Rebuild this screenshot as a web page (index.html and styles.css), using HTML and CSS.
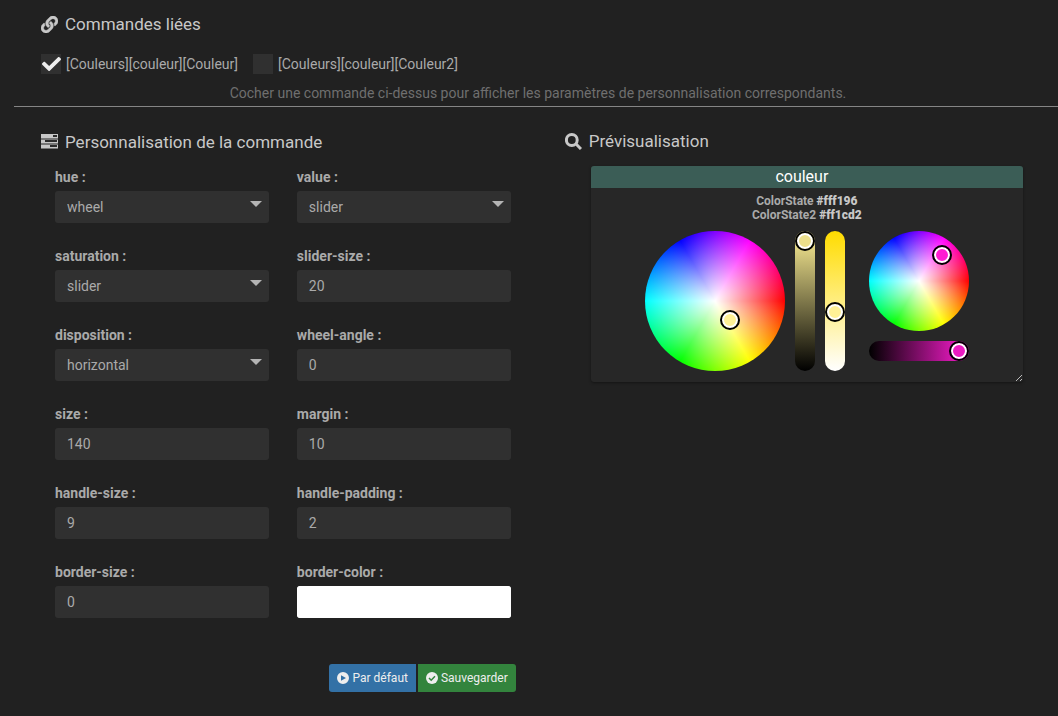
FILE: index.html
```html
<!DOCTYPE html>
<html lang="fr">
<head>
<meta charset="utf-8">
<title>Personnalisation des commandes</title>
<link rel="stylesheet" href="styles.css">
</head>
<body>
<section class="linked">
  <h2 class="legend">
    <svg class="icon icon-link" viewBox="0 0 512 512" aria-hidden="true"><path d="M326.612 185.391c59.747 59.809 58.927 155.698.36 214.59-.11.12-.24.25-.36.37l-67.2 67.2c-59.27 59.27-155.699 59.262-214.96 0-59.27-59.26-59.27-155.7 0-214.96l37.106-37.106c9.84-9.84 26.786-3.3 27.294 10.606.648 17.722 3.826 35.527 9.69 52.721 1.986 5.822.567 12.262-3.783 16.612l-13.087 13.087c-28.026 28.026-28.905 73.66-1.155 101.96 28.024 28.579 74.086 28.749 102.325.51l67.2-67.19c28.191-28.191 28.073-73.757 0-101.83-3.701-3.694-7.429-6.564-10.341-8.569a16.037 16.037 0 0 1-6.947-12.606c-.396-10.567 3.348-21.456 11.698-29.806l21.054-21.055c5.521-5.521 14.182-6.199 20.584-1.731a152.482 152.482 0 0 1 20.522 17.197zM467.547 44.449c-59.261-59.262-155.69-59.27-214.96 0l-67.2 67.2c-.12.12-.25.25-.36.37-58.566 58.892-59.387 154.781.36 214.59a152.454 152.454 0 0 0 20.521 17.196c6.402 4.468 15.064 3.789 20.584-1.731l21.054-21.055c8.35-8.35 12.094-19.239 11.698-29.806a16.037 16.037 0 0 0-6.947-12.606c-2.912-2.005-6.64-4.875-10.341-8.569-28.073-28.073-28.191-73.639 0-101.83l67.2-67.19c28.239-28.239 74.3-28.069 102.325.51 27.75 28.3 26.872 73.934-1.155 101.96l-13.087 13.087c-4.35 4.35-5.769 10.79-3.783 16.612 5.864 17.194 9.042 34.999 9.69 52.721.509 13.906 17.454 20.446 27.294 10.606l37.106-37.106c59.271-59.259 59.271-155.699.001-214.959z"/></svg>
    Commandes liées
  </h2>
  <div class="checks">
    <label class="check">
      <input type="checkbox" class="check-box" checked>
      <svg class="check-mark" viewBox="0 0 512 512" aria-hidden="true"><path d="M173.898 439.404l-166.4-166.4c-9.997-9.997-9.997-26.206 0-36.204l36.203-36.204c9.997-9.998 26.207-9.998 36.204 0L192 312.69 432.095 72.596c9.997-9.997 26.207-9.997 36.204 0l36.203 36.204c9.997 9.997 9.997 26.206 0 36.204l-294.4 294.401c-9.998 9.997-26.207 9.997-36.204-.001z"/></svg>
      <span>[Couleurs][couleur][Couleur]</span>
    </label>
    <label class="check">
      <input type="checkbox" class="check-box">
      <svg class="check-mark" viewBox="0 0 512 512" aria-hidden="true"><path d="M173.898 439.404l-166.4-166.4c-9.997-9.997-9.997-26.206 0-36.204l36.203-36.204c9.997-9.998 26.207-9.998 36.204 0L192 312.69 432.095 72.596c9.997-9.997 26.207-9.997 36.204 0l36.203 36.204c9.997 9.997 9.997 26.206 0 36.204l-294.4 294.401c-9.998 9.997-26.207 9.997-36.204-.001z"/></svg>
      <span>[Couleurs][couleur][Couleur2]</span>
    </label>
  </div>
  <p class="hint">Cocher une commande ci-dessus pour afficher les paramètres de personnalisation correspondants.</p>
</section>

<main class="columns">
  <form class="settings">
    <h2 class="legend">
      <svg class="icon" viewBox="0 0 17 17" aria-hidden="true"><path class="icon-edge" d="M0 0h17v15H0z"/><path d="M0 0h17v4H0zM0 6h17v3H0zM0 11h17v3H0z"/><path class="icon-cut" d="M12 1h4v2h-4zM4 6h12v2H4zM9 11h7v2H9z"/></svg>
      Personnalisation de la commande
    </h2>
    <div class="fields">
      <div class="field"><label class="field-label" for="hue">hue :</label><select class="control select" id="hue"><option>wheel</option><option>slider</option></select></div>
      <div class="field"><label class="field-label" for="value">value :</label><select class="control select" id="value"><option>slider</option></select></div>
      <div class="field"><label class="field-label" for="saturation">saturation :</label><select class="control select" id="saturation"><option>slider</option></select></div>
      <div class="field"><label class="field-label" for="slider-size">slider-size :</label><input class="control" id="slider-size" type="text" value="20"></div>
      <div class="field"><label class="field-label" for="disposition">disposition :</label><select class="control select" id="disposition"><option>horizontal</option><option>vertical</option></select></div>
      <div class="field"><label class="field-label" for="wheel-angle">wheel-angle :</label><input class="control" id="wheel-angle" type="text" value="0"></div>
      <div class="field"><label class="field-label" for="size">size :</label><input class="control" id="size" type="text" value="140"></div>
      <div class="field"><label class="field-label" for="margin">margin :</label><input class="control" id="margin" type="text" value="10"></div>
      <div class="field"><label class="field-label" for="handle-size">handle-size :</label><input class="control" id="handle-size" type="text" value="9"></div>
      <div class="field"><label class="field-label" for="handle-padding">handle-padding :</label><input class="control" id="handle-padding" type="text" value="2"></div>
      <div class="field"><label class="field-label" for="border-size">border-size :</label><input class="control" id="border-size" type="text" value="0"></div>
      <div class="field"><label class="field-label" for="border-color">border-color :</label><input class="control color" id="border-color" type="color" value="#ffffff"></div>
    </div>
    <div class="actions">
      <button type="button" class="btn btn-default"><svg class="btn-icon" viewBox="0 0 12 12" aria-hidden="true"><path fill-rule="evenodd" d="M6 0a6 6 0 1 0 0 12A6 6 0 0 0 6 0zM4 3.2v5.6L9 6z"/></svg>Par défaut</button>
      <button type="submit" class="btn btn-save"><svg class="btn-icon" viewBox="0 0 12 12" aria-hidden="true"><circle cx="6" cy="6" r="6"/><path class="tick" d="M3 6l2.200 2.200L9 4.300"/></svg>Sauvegarder</button>
    </div>
  </form>

  <section class="preview">
    <h2 class="legend">
      <svg class="icon" viewBox="0 0 17 17" aria-hidden="true"><path class="lens" d="M12.200 7A5.400 5.400 0 1 1 1.400 7a5.400 5.400 0 0 1 10.800 0zM10.800 10.800L16 16"/></svg>
      Prévisualisation
    </h2>
    <article class="widget">
      <h3 class="widget-name">couleur</h3>
      <div class="states">
        <div>ColorState <b class="state">#fff196</b></div>
        <div>ColorState2 <b class="state">#ff1cd2</b></div>
      </div>
      <div class="pickers">
        <div class="picker">
          <div class="wheel wheel-large"><i class="handle handle-wheel1"></i></div>
          <div class="slider-v slider-value"><i class="handle handle-value1"></i></div>
          <div class="slider-v slider-sat"><i class="handle handle-sat1"></i></div>
        </div>
        <div class="picker picker-stack">
          <div class="wheel wheel-small"><i class="handle handle-wheel2"></i></div>
          <div class="slider-h"><i class="handle handle-value2"></i></div>
        </div>
      </div>
      <svg class="grip" viewBox="0 0 8 8" aria-hidden="true"><path d="M1 7L7 1M5 7l2-2"/></svg>
    </article>
  </section>
</main>
</body>
</html>
```
FILE: styles.css
```css
* { box-sizing: border-box; }

body {
  margin: 0;
  background: #212121;
  color: #aaa;
  font: 14px/20px Roboto, sans-serif;
}

.linked {
  margin-left: 14px;
  padding: 12px 0 3px 27px;
  border-bottom: 1px solid #858585;
}

.legend {
  display: flex;
  align-items: center;
  gap: 7px;
  margin: 0;
  color: #c8c8c8;
  font-size: 17px;
  font-weight: 400;
  line-height: 24px;
}

.icon { flex: none; width: 17px; height: 17px; fill: #c8c8c8; }
.icon-link { stroke: #c8c8c8; stroke-width: 14; }
.icon-edge { fill: #777; }
.icon-cut { fill: #2c2c2c; }
.lens { fill: none; stroke: #c8c8c8; stroke-width: 3; }

.checks { display: flex; gap: 15px; margin-top: 18px; }

.check {
  display: grid;
  grid-template-columns: 20px auto;
  column-gap: 5px;
  align-items: center;
}

.check-box {
  grid-area: 1 / 1;
  appearance: none;
  width: 20px;
  height: 20px;
  margin: 0;
  background: #303030;
}

.check-mark {
  grid-area: 1 / 1;
  visibility: hidden;
  justify-self: center;
  width: 19px;
  height: 20px;
  fill: #eee;
}

.check-box:checked + .check-mark { visibility: visible; }

.hint {
  margin: 9px 35px 0 0;
  padding-left: 12px;
  color: #6f6f6f;
  text-align: center;
}

.columns {
  display: grid;
  grid-template-columns: minmax(0, 8fr) minmax(0, 7fr);
  padding: 22px 35px 24px 41px;
}

.settings { padding-top: 1px; }

.fields {
  display: grid;
  grid-template-columns: 1fr 1fr;
  gap: 23px 28px;
  padding: 13px 54px 0 14px;
}

.field { display: flex; flex-direction: column; gap: 4px; }
.field-label { font-weight: 700; }

.control {
  width: 100%;
  height: 32px;
  padding: 0 12px;
  border: 0;
  border-radius: 3px;
  background: #303030;
  color: #aaa;
  font: inherit;
}

.select {
  appearance: none;
  background: #303030 url("data:image/svg+xml,%3Csvg xmlns='http://www.w3.org/2000/svg' viewBox='0 0 12 6'%3E%3Cpath d='M0 0h12L6 6z' fill='%23b4b4b4'/%3E%3C/svg%3E") no-repeat right 7px top 10px / 12px 6px;
}

.color { background: #fff; padding: 0; }
.color::-webkit-color-swatch-wrapper { padding: 0; }
.color::-webkit-color-swatch { border: 0; border-radius: 3px; }

.actions {
  display: flex;
  justify-content: flex-end;
  gap: 2px;
  margin-top: 46px;
  padding-right: 49px;
}

.btn {
  display: flex;
  align-items: center;
  gap: 3px;
  height: 28px;
  padding: 0 8px;
  border: 0;
  color: #eee;
  font: 12px/18px Roboto, sans-serif;
}

.btn-default { border-radius: 3px 0 0 3px; background: #3371a6; }
.btn-save { border-radius: 0 3px 3px 0; background: #33843d; }
.btn-icon { width: 12px; height: 12px; fill: #eee; }
.tick { fill: none; stroke: #33843d; stroke-width: 1.5; }

.widget {
  position: relative;
  margin: 13px 0 0 26px;
  border-radius: 3px;
  background: #272727;
  box-shadow: 0 1px 3px #0006;
}

.widget-name {
  margin: 0;
  padding-right: 10px;
  border-radius: 3px 3px 0 0;
  background: #3b5d56;
  color: #fff;
  font-size: 16px;
  font-weight: 400;
  line-height: 22px;
  text-align: center;
}

.states {
  padding-top: 6px;
  font-size: 12px;
  font-weight: 700;
  line-height: 14px;
  text-align: center;
}

.state { color: #c8c8c8; }

.pickers {
  display: flex;
  justify-content: center;
  gap: 24px;
  padding: 9px 0 11px;
}

.picker { display: flex; gap: 10px; }
.picker-stack { flex-direction: column; }

.wheel {
  position: relative;
  border-radius: 50%;
  background:
    radial-gradient(closest-side, #fff, #fff0),
    conic-gradient(from 90deg, red, #ff0, lime, cyan, blue, magenta, red);
}

.wheel-large { width: 140px; height: 140px; }
.wheel-small { width: 100px; height: 100px; }

.slider-v, .slider-h { position: relative; border-radius: 10px; }
.slider-v { width: 20px; height: 140px; }
.slider-h { width: 100px; height: 20px; background: linear-gradient(to right, #000, #ff1cd2); }
.slider-value { background: linear-gradient(#fff196, #000); }
.slider-sat { background: linear-gradient(#ffdc00, #fff); }

.handle {
  position: absolute;
  width: 20px;
  height: 20px;
  border: 2px solid #000;
  border-radius: 50%;
  background: #fff196;
  box-shadow: inset 0 0 0 2px #fff;
}

.handle-wheel1 { left: 75px; top: 79px; }
.handle-value1 { left: 0; top: 0; background: #ecdf8b; }
.handle-sat1 { left: 0; top: 71px; }
.handle-wheel2 { left: 63px; top: 14px; background: #ff1cd2; }
.handle-value2 { left: 80px; top: 0; background: #ec1ac2; }

.grip {
  position: absolute;
  right: 0;
  bottom: 0;
  width: 8px;
  height: 8px;
  fill: none;
  stroke: #bbb;
}
```
